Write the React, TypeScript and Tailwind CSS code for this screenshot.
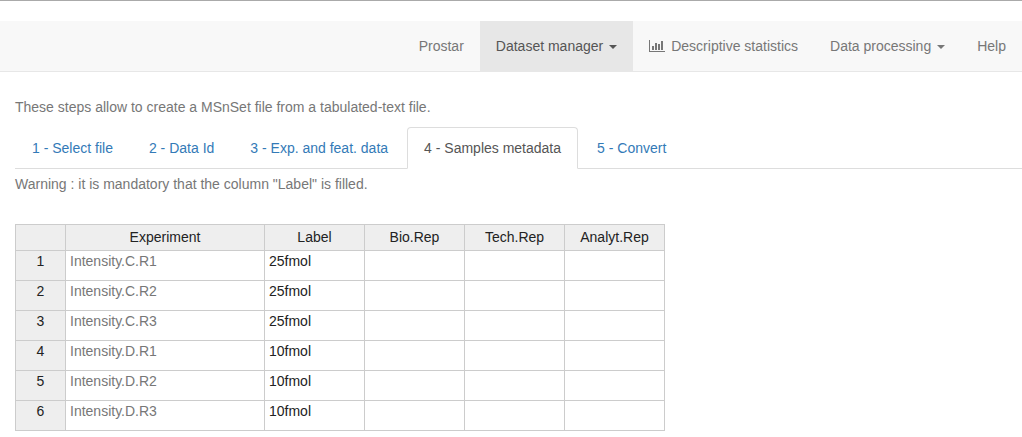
import React from "react";

const steps = [
  "1 - Select file",
  "2 - Data Id",
  "3 - Exp. and feat. data",
  "4 - Samples metadata",
  "5 - Convert",
];
const activeStep = 3;

const columns = ["Experiment", "Label", "Bio.Rep", "Tech.Rep", "Analyt.Rep"];

const samples = [
  ["Intensity.C.R1", "25fmol"],
  ["Intensity.C.R2", "25fmol"],
  ["Intensity.C.R3", "25fmol"],
  ["Intensity.D.R1", "10fmol"],
  ["Intensity.D.R2", "10fmol"],
  ["Intensity.D.R3", "10fmol"],
];

function Caret() {
  return (
    <svg width="8" height="4" viewBox="0 0 8 4" className="mt-0.5 ml-1.5" fill="currentColor" aria-hidden="true">
      <path d="M0 0h8L4 4z" />
    </svg>
  );
}

function BarChart() {
  return (
    <svg
      width="16"
      height="12"
      viewBox="0 0 16 12"
      className="mr-1.5"
      fill="currentColor"
      shapeRendering="crispEdges"
      aria-hidden="true"
    >
      <path d="M0 0h1v11h15v1H0zM3 6h2v4H3zM6 3h2v7H6zM9 4h2v6H9zM12 1h2v9h-2z" />
    </svg>
  );
}

function NavItem({ active = false, children }: { active?: boolean; children: React.ReactNode }) {
  return (
    <li>
      <a
        href="#"
        className={
          active
            ? "flex items-center bg-[#e7e7e7] px-4 py-[15px] text-[#555]"
            : "flex items-center px-4 py-[15px] text-[#777]"
        }
      >
        {children}
      </a>
    </li>
  );
}

const headCell = "h-[26px] border-r border-b border-[#ccc] bg-[#eee] px-1 text-center font-normal";
const cell = "h-[30px] border-r border-b border-[#ccc] px-1 align-top";

export default function App() {
  return (
    <div className="border-t border-[#aaa] bg-white font-['Liberation_Sans',Arial,sans-serif] text-[14px] leading-5 text-[#777]">
      <nav className="mt-5 border-b border-[#e7e7e7] bg-[#f8f8f8]">
        <ul className="flex flex-wrap justify-end">
          <NavItem>Prostar</NavItem>
          <NavItem active>
            Dataset manager
            <Caret />
          </NavItem>
          <NavItem>
            <BarChart />
            Descriptive statistics
          </NavItem>
          <NavItem>
            Data processing
            <Caret />
          </NavItem>
          <NavItem>Help</NavItem>
        </ul>
      </nav>

      <main className="pt-[25px] pb-1.5 pl-[15px]">
        <p>These steps allow to create a MSnSet file from a tabulated-text file.</p>

        <ul className="mt-2.5 flex border-b border-[#ddd]">
          {steps.map((step, i) => (
            <li key={step} className="-mb-px mr-0.5">
              <a
                href="#"
                aria-current={i === activeStep ? "step" : undefined}
                className={
                  i === activeStep
                    ? "block rounded-t border border-[#ddd] border-b-white bg-white px-4 py-2.5 text-[#555]"
                    : "block border border-transparent px-4 py-2.5 text-[#337ab7]"
                }
              >
                {step}
              </a>
            </li>
          ))}
        </ul>

        <p className="mt-[5px]">Warning : it is mandatory that the column "Label" is filled.</p>

        <table className="mt-[30px] table-fixed border-separate border-spacing-0 border-t border-l border-[#ccc] leading-[21px] text-[#222]">
          <colgroup>
            <col className="w-[50px]" />
            <col className="w-[199px]" />
            <col className="w-[100px]" />
            <col className="w-[100px]" />
            <col className="w-[100px]" />
            <col className="w-[100px]" />
          </colgroup>
          <thead>
            <tr>
              <td className={headCell} />
              {columns.map((name) => (
                <th key={name} scope="col" className={headCell}>
                  {name}
                </th>
              ))}
            </tr>
          </thead>
          <tbody>
            {samples.map(([experiment, label], i) => (
              <tr key={experiment}>
                <th scope="row" className={`${cell} bg-[#eee] text-center font-normal`}>
                  {i + 1}
                </th>
                <td className={`${cell} text-[#777]`}>{experiment}</td>
                <td className={cell}>{label}</td>
                <td className={cell} />
                <td className={cell} />
                <td className={cell} />
              </tr>
            ))}
          </tbody>
        </table>
      </main>
    </div>
  );
}
